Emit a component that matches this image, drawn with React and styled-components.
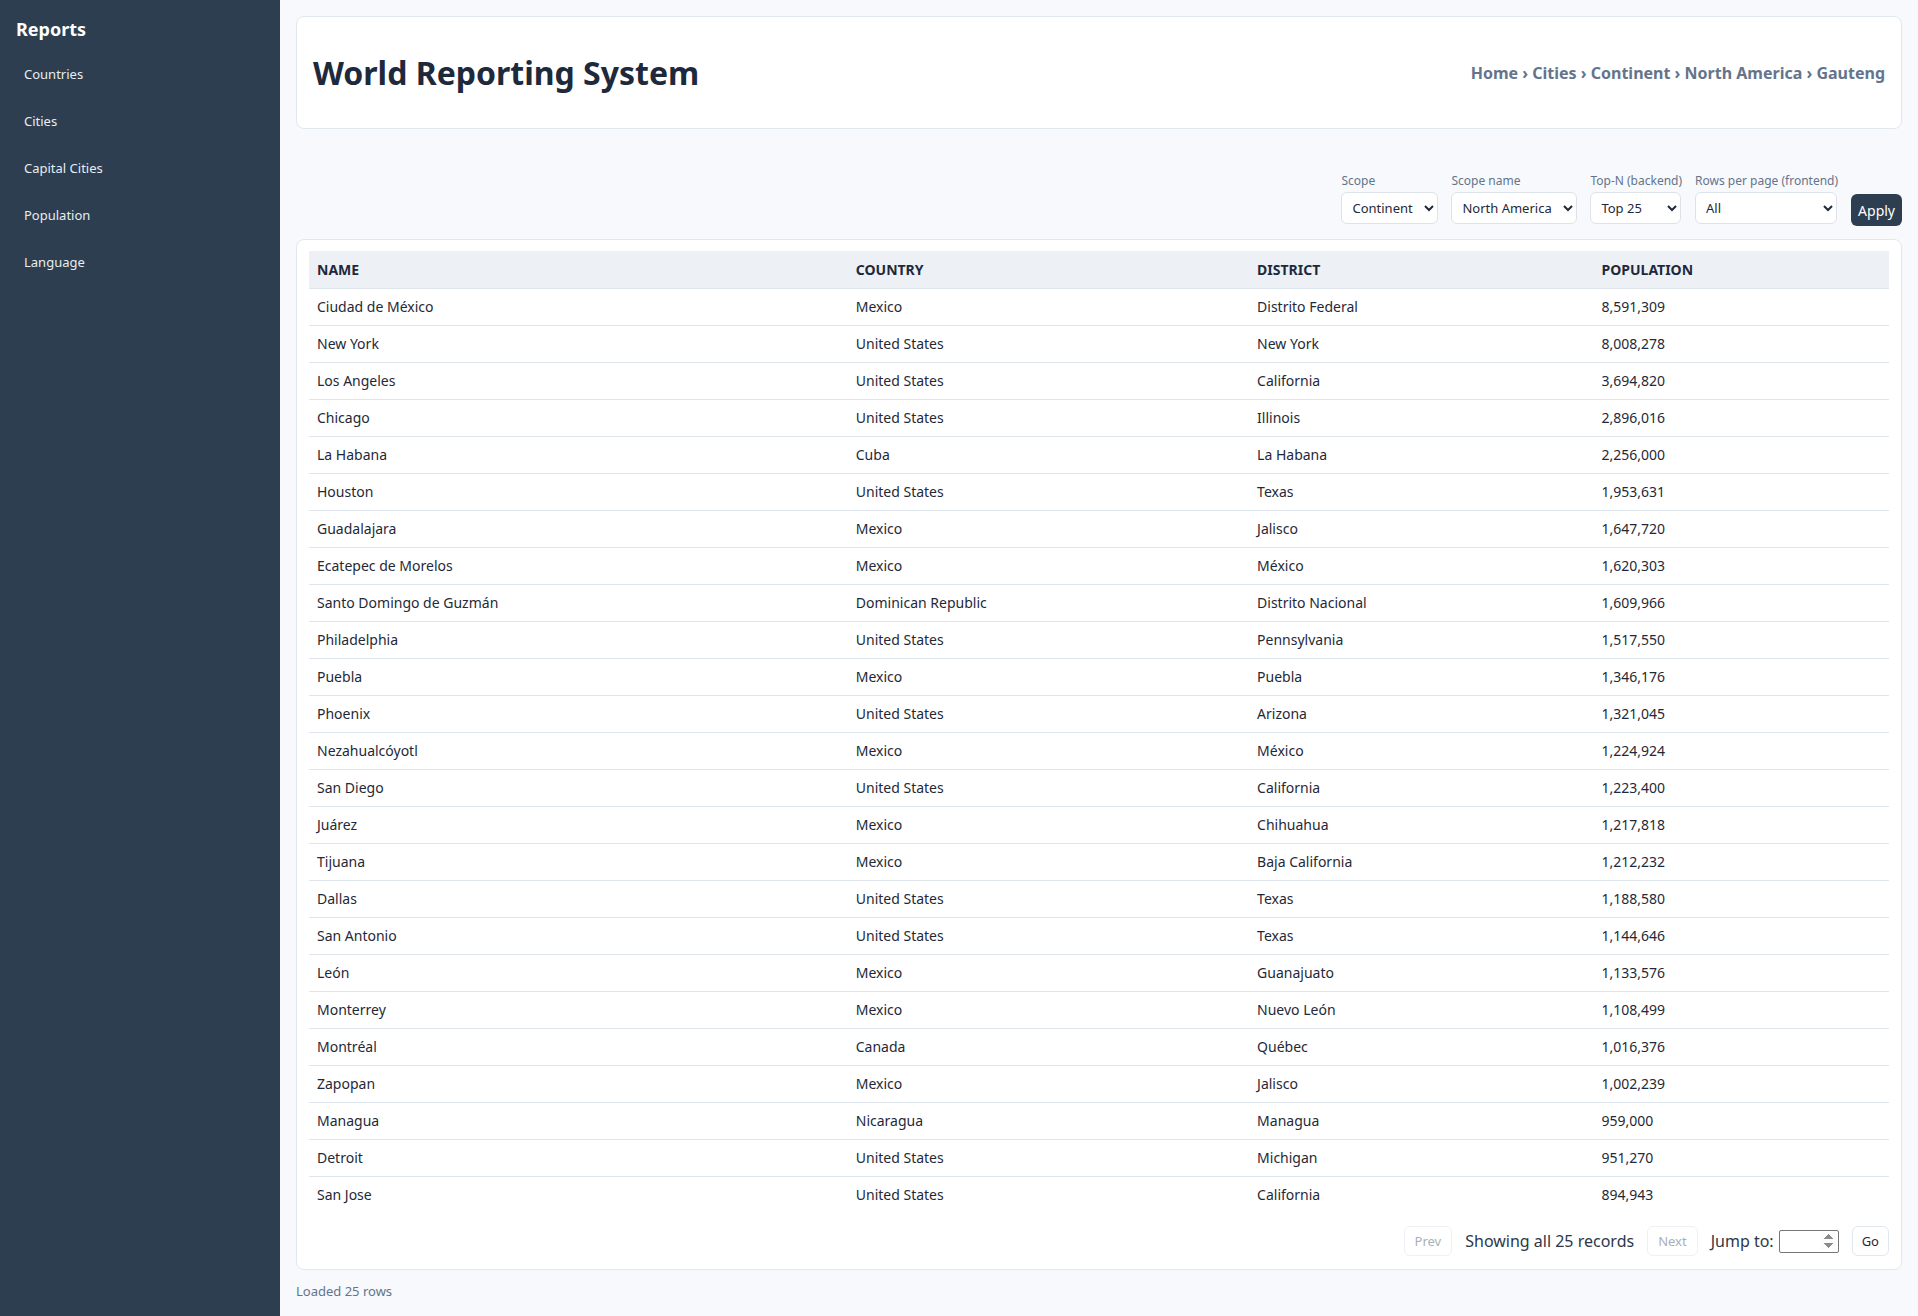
import React from "react";
import styled, { createGlobalStyle } from "styled-components";

const GlobalStyle = createGlobalStyle`
  html, body {
    margin: 0;
    padding: 0;
    background: #f7f9fc;
    font-family: "Noto Sans", "Open Sans", sans-serif;
    color: #1f2937;
  }
  * {
    box-sizing: border-box;
  }
`;

const cities = [
  ["Ciudad de México", "Mexico", "Distrito Federal", "8,591,309"],
  ["New York", "United States", "New York", "8,008,278"],
  ["Los Angeles", "United States", "California", "3,694,820"],
  ["Chicago", "United States", "Illinois", "2,896,016"],
  ["La Habana", "Cuba", "La Habana", "2,256,000"],
  ["Houston", "United States", "Texas", "1,953,631"],
  ["Guadalajara", "Mexico", "Jalisco", "1,647,720"],
  ["Ecatepec de Morelos", "Mexico", "México", "1,620,303"],
  ["Santo Domingo de Guzmán", "Dominican Republic", "Distrito Nacional", "1,609,966"],
  ["Philadelphia", "United States", "Pennsylvania", "1,517,550"],
  ["Puebla", "Mexico", "Puebla", "1,346,176"],
  ["Phoenix", "United States", "Arizona", "1,321,045"],
  ["Nezahualcóyotl", "Mexico", "México", "1,224,924"],
  ["San Diego", "United States", "California", "1,223,400"],
  ["Juárez", "Mexico", "Chihuahua", "1,217,818"],
  ["Tijuana", "Mexico", "Baja California", "1,212,232"],
  ["Dallas", "United States", "Texas", "1,188,580"],
  ["San Antonio", "United States", "Texas", "1,144,646"],
  ["León", "Mexico", "Guanajuato", "1,133,576"],
  ["Monterrey", "Mexico", "Nuevo León", "1,108,499"],
  ["Montréal", "Canada", "Québec", "1,016,376"],
  ["Zapopan", "Mexico", "Jalisco", "1,002,239"],
  ["Managua", "Nicaragua", "Managua", "959,000"],
  ["Detroit", "United States", "Michigan", "951,270"],
  ["San Jose", "United States", "California", "894,943"],
];

const navItems = ["Countries", "Cities", "Capital Cities", "Population", "Language"];

const Layout = styled.div`
  display: flex;
  min-height: 1316px;
`;

const Sidebar = styled.aside`
  width: 280px;
  flex-shrink: 0;
  background: #2c3e50;
  color: #fff;
  padding: 15px 16px 16px;
`;

const SidebarTitle = styled.h2`
  margin: 0 0 8px;
  font-size: 18px;
  line-height: 28px;
  font-weight: 700;
`;

const NavLink = styled.a`
  display: block;
  padding: 14px 8px;
  font-size: 13px;
  line-height: 19px;
  color: #e8edf2;
  text-decoration: none;
`;

const Main = styled.main`
  flex: 1;
  padding: 16px;
`;

const HeaderCard = styled.header`
  display: flex;
  align-items: center;
  justify-content: space-between;
  height: 113px;
  padding: 0 16px;
  background: #fff;
  border: 1px solid #e2e8f0;
  border-radius: 8px;
`;

const Title = styled.h1`
  margin: 0;
  font-size: 32px;
  font-weight: 700;
  color: #1e293b;
`;

const Breadcrumb = styled.nav`
  font-size: 16px;
  font-weight: 700;
  color: #64748b;
`;

const FilterBar = styled.div`
  display: flex;
  justify-content: flex-end;
  align-items: flex-end;
  gap: 13px;
  margin-top: 44px;
`;

const Field = styled.label`
  display: flex;
  flex-direction: column;
  gap: 3px;
`;

const FieldLabel = styled.span`
  font-size: 12px;
  line-height: 16px;
  color: #64748b;
`;

const Select = styled.select`
  width: ${(p) => p.$w}px;
  height: 32px;
  padding: 0 6px;
  font-family: inherit;
  font-size: 13px;
  color: #1f2937;
  background: #fff;
  border: 1px solid #dde3ea;
  border-radius: 6px;
`;

const ApplyButton = styled.button`
  height: 32px;
  margin-bottom: -2px;
  padding: 0 7px;
  font-family: inherit;
  font-size: 14px;
  color: #fff;
  background: #2c3e50;
  border: none;
  border-radius: 6px;
`;

const TableCard = styled.section`
  margin-top: 15px;
  padding: 11px 12px 13px;
  background: #fff;
  border: 1px solid #e2e8f0;
  border-radius: 8px;
`;

const Table = styled.table`
  width: 100%;
  border-collapse: collapse;
  table-layout: fixed;
`;

const Th = styled.th`
  width: ${(p) => p.$w};
  padding: 8px;
  height: 37px;
  text-align: left;
  font-size: 14px;
  font-weight: 700;
  text-transform: uppercase;
  color: #1e293b;
  background: #edf1f6;
  border-bottom: 1px solid #dfe5ec;
`;

const Td = styled.td`
  padding: 8px;
  height: 37px;
  font-size: 14px;
  line-height: 20px;
  color: #1f2937;
  border-bottom: 1px solid #dfe5ec;
`;

const LastRow = styled.tr`
  td {
    border-bottom: none;
  }
`;

const Pagination = styled.div`
  display: flex;
  justify-content: flex-end;
  align-items: center;
  gap: 13px;
  margin-top: 13px;
`;

const PageButton = styled.button`
  height: 30px;
  padding: 0 ${(p) => (p.disabled ? 10 : 9)}px;
  font-family: inherit;
  font-size: 13px;
  color: ${(p) => (p.disabled ? "#a8b0bb" : "#1f2937")};
  background: #fff;
  border: 1px solid ${(p) => (p.disabled ? "#edf0f4" : "#e2e8f0")};
  border-radius: 6px;
`;

const PageInfo = styled.span`
  font-size: 16px;
  color: #2d3748;
`;

const JumpLabel = styled.label`
  display: flex;
  align-items: center;
  gap: 5px;
  font-size: 16px;
  color: #2d3748;
`;

const JumpInput = styled.input`
  width: 60px;
  height: 23px;
  font-family: inherit;
  font-size: 13px;
  border: 1px solid #767676;
  border-radius: 2px;
  &::-webkit-inner-spin-button {
    opacity: 1;
  }
`;

const Status = styled.p`
  margin: 12px 0 0;
  font-size: 13px;
  line-height: 18px;
  color: #64748b;
`;

const columns = [
  ["Name", "34.1%"],
  ["Country", "25.4%"],
  ["District", "21.8%"],
  ["Population", "18.7%"],
];

export default function App() {
  return (
    <>
      <GlobalStyle />
      <Layout>
        <Sidebar>
          <SidebarTitle>Reports</SidebarTitle>
          {navItems.map((item) => (
            <NavLink key={item} href="#">
              {item}
            </NavLink>
          ))}
        </Sidebar>
        <Main>
          <HeaderCard>
            <Title>World Reporting System</Title>
            <Breadcrumb>Home › Cities › Continent › North America › Gauteng</Breadcrumb>
          </HeaderCard>

          <FilterBar>
            <Field>
              <FieldLabel>Scope</FieldLabel>
              <Select $w={97} defaultValue="Continent">
                <option>Continent</option>
              </Select>
            </Field>
            <Field>
              <FieldLabel>Scope name</FieldLabel>
              <Select $w={126} defaultValue="North America">
                <option>North America</option>
              </Select>
            </Field>
            <Field>
              <FieldLabel>Top-N (backend)</FieldLabel>
              <Select $w={91} defaultValue="Top 25">
                <option>Top 25</option>
              </Select>
            </Field>
            <Field>
              <FieldLabel>Rows per page (frontend)</FieldLabel>
              <Select $w={142} defaultValue="All">
                <option>All</option>
              </Select>
            </Field>
            <ApplyButton>Apply</ApplyButton>
          </FilterBar>

          <TableCard>
            <Table>
              <thead>
                <tr>
                  {columns.map(([label, w]) => (
                    <Th key={label} $w={w}>
                      {label}
                    </Th>
                  ))}
                </tr>
              </thead>
              <tbody>
                {cities.map((row, i) => {
                  const Row = i === cities.length - 1 ? LastRow : "tr";
                  return (
                    <Row key={row[0]}>
                      {row.map((cell, j) => (
                        <Td key={j}>{cell}</Td>
                      ))}
                    </Row>
                  );
                })}
              </tbody>
            </Table>
            <Pagination>
              <PageButton disabled>Prev</PageButton>
              <PageInfo>Showing all 25 records</PageInfo>
              <PageButton disabled>Next</PageButton>
              <JumpLabel>
                Jump to:
                <JumpInput type="number" />
              </JumpLabel>
              <PageButton>Go</PageButton>
            </Pagination>
          </TableCard>
          <Status>Loaded 25 rows</Status>
        </Main>
      </Layout>
    </>
  );
}
